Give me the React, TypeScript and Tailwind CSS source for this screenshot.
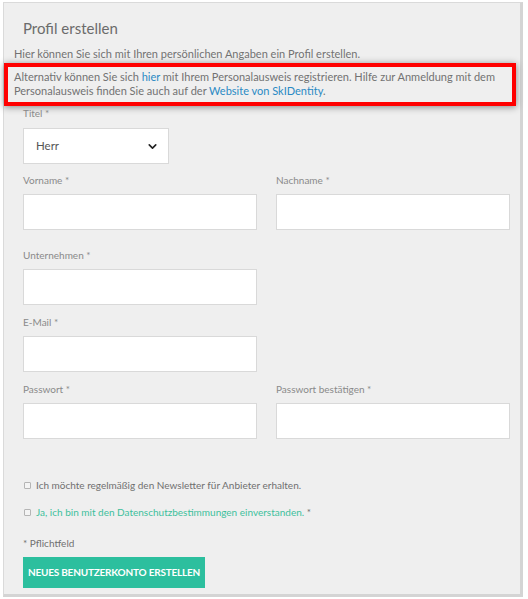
import React from "react";
import { ChevronDown } from "lucide-react";

const font = { fontFamily: "Lato, 'Open Sans', sans-serif" };

function Field({ label, className = "" }: { label: string; className?: string }) {
  return (
    <div className={"flex flex-col " + className}>
      <div className="h-[14px] text-[10px] leading-[14px] text-[#8a8a8a]">{label}</div>
      <div className="mt-[7px] h-[36px] w-[234px] border border-[#d9d9d9] bg-white" />
    </div>
  );
}

export default function App() {
  return (
    <div className="w-[528px] h-[599px] bg-white" style={font}>
      <div className="relative ml-[3px] pt-[2px]">
        <div className="w-[520px] h-[595px] bg-[#efefef] border-l border-t border-[#dadada] border-r-[3px] border-b-[3px] border-r-[#d4d4d4] border-b-[#d4d4d4]">
          <h1 className="pl-[19px] pt-[15px] text-[15px] leading-[20px] text-[#6b6b6b] font-normal">Profil erstellen</h1>
          <p className="pl-[10px] mt-[9px] text-[11px] leading-[14px] text-[#727272]">
            Hier können Sie sich mit Ihren persönlichen Angaben ein Profil erstellen.
          </p>
          <div className="mt-[2px] w-[512px] border-[4px] border-[#ff0000] shadow-[0_1px_7px_rgba(0,0,0,0.45)] pl-[6px] pr-[4px] pt-[3px] pb-[4px] text-[11px] leading-[14px] text-[#727272]">
            <div>Alternativ können Sie sich <span className="text-[#2a8ac4]">hier</span> mit Ihrem Personalausweis registrieren. Hilfe zur Anmeldung mit dem</div>
            <div>Personalausweis finden Sie auch auf der <span className="text-[#2a8ac4]">Website von SkIDentity</span>.</div>
          </div>
          <div className="pl-[19px]">
            <div className="h-[14px] text-[10px] leading-[14px] text-[#8a8a8a]">Titel *</div>
            <div className="mt-[8px] h-[36px] w-[146px] border border-[#d9d9d9] bg-white flex items-center justify-between pl-[12px] pr-[9px]">
              <span className="text-[11.5px] text-[#555]">Herr</span>
              <ChevronDown size={13} strokeWidth={3} className="text-[#222]" />
            </div>
            <div className="mt-[9px] flex gap-[19px]">
              <Field label="Vorname *" />
              <Field label="Nachname *" />
            </div>
            <Field label="Unternehmen *" className="mt-[18px]" />
            <Field label="E-Mail *" className="mt-[10px]" />
            <div className="mt-[10px] flex gap-[19px]">
              <Field label="Passwort *" />
              <Field label="Passwort bestätigen *" />
            </div>
            <div className="mt-[39px] flex items-center gap-[5px] text-[10px] leading-[14px] text-[#6f6f6f]">
              <span className="ml-[1px] w-[7px] h-[7px] border border-[#b5b5b5] rounded-[1px] bg-[#f4f4f4]" />
              <span>Ich möchte regelmäßig den Newsletter für Anbieter erhalten.</span>
            </div>
            <div className="mt-[13px] flex items-center gap-[5px] text-[10px] leading-[14px]">
              <span className="ml-[1px] w-[7px] h-[7px] border border-[#b5b5b5] rounded-[1px] bg-[#f4f4f4]" />
              <span className="text-[#3dbf9c]">Ja, ich bin mit den Datenschutzbestimmungen einverstanden. <span className="text-[#6f6f6f]">*</span></span>
            </div>
            <div className="mt-[17px] text-[10px] leading-[14px] text-[#6f6f6f]">* Pflichtfeld</div>
            <button className="mt-[7px] h-[31px] w-[182px] bg-[#2cbf9e] text-white text-[10px] font-bold tracking-[-0.2px] uppercase whitespace-nowrap flex items-center justify-center">
              Neues Benutzerkonto erstellen
            </button>
          </div>
        </div>
      </div>
    </div>
  );
}
